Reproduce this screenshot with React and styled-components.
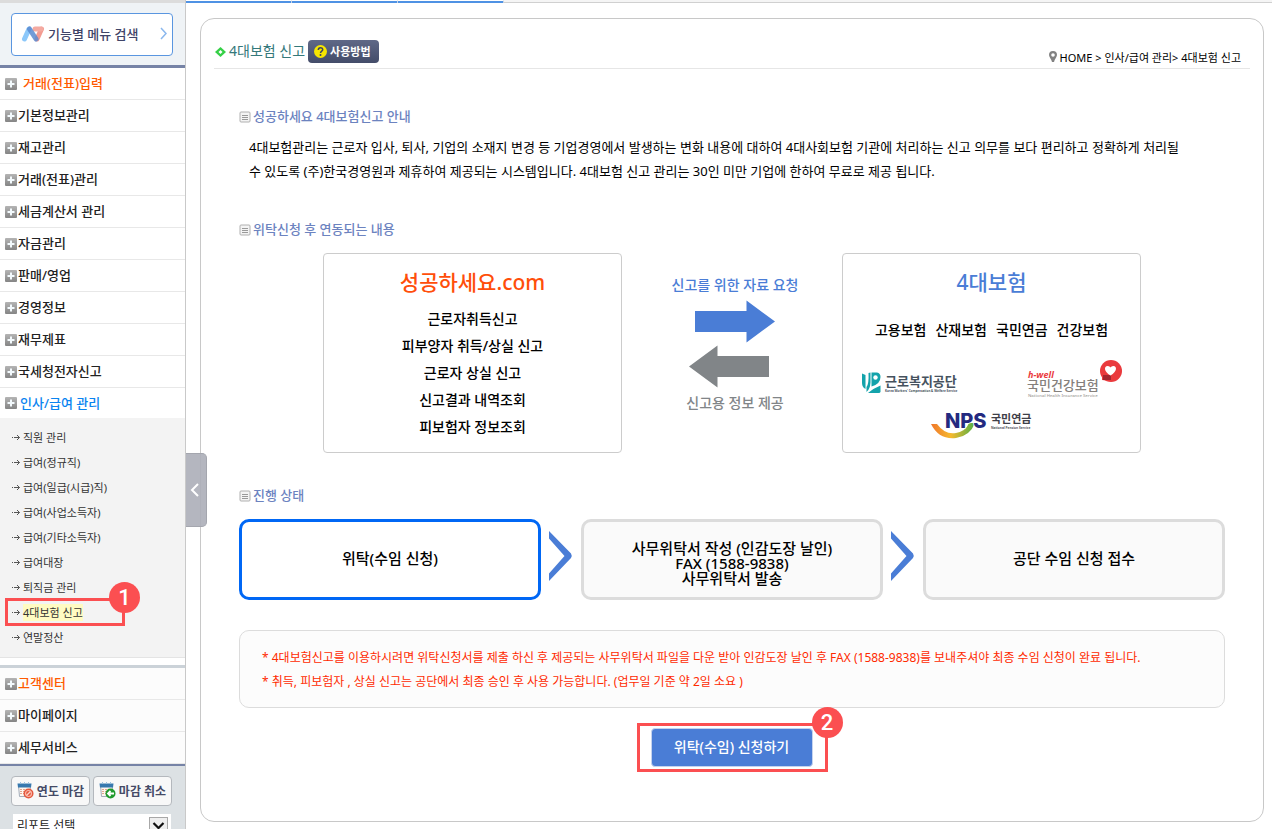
import React from 'react'
import styled, { createGlobalStyle } from 'styled-components'

const GlobalStyle = createGlobalStyle`
    * {
        box-sizing: border-box;
    }

    body {
        margin: 0;
        background: #fff;
        color: #000;
        font-family: 'Noto Sans', 'Noto Sans CJK KR', sans-serif;
        font-size: 13px;
    }

    a {
        color: inherit;
        text-decoration: none;
    }

    ul, p, h1, h2, h3 {
        margin: 0;
        padding: 0;
        list-style: none;
    }

    button, select {
        font-family: inherit;
    }

    svg {
        display: block;
        flex: none;
    }
`

const Page = styled.div`
    display: flex;
    height: 100vh;
    overflow: hidden;
`

const Sidebar = styled.aside`
    display: flex;
    flex-direction: column;
    flex: none;
    width: 186px;
    border-right: 1px solid #c9c9c9;
    background: #fff;
`

const SearchArea = styled.div`
    padding: 10px 12px 9px 11px;
    background: #eff3f6;
    border-top: 3px solid #dcdcdc;
    border-bottom: 3px solid #7683a6;
`

const SearchButton = styled.button`
    display: flex;
    align-items: center;
    gap: 3px;
    width: 100%;
    height: 43px;
    padding: 0 5px 2px 9px;
    border: 1px solid #5a96e0;
    border-radius: 4px;
    background: #fff;
    color: #3f4468;
    font-size: 13px;
    font-weight: 500;
    cursor: pointer;

    span {
        flex: 1;
        text-align: left;
        white-space: nowrap;
    }
`

const MenuLink = styled.a`
    display: flex;
    align-items: center;
    gap: ${({ $gap }) => $gap || 1}px;
    height: ${({ $last }) => ($last ? 30 : 32)}px;
    padding-left: 5px;
    border-bottom: ${({ $last }) => ($last ? 'none' : '1px solid #e8e8e8')};
    color: ${({ $color }) => $color || '#222'};
    font-weight: 500;

    span {
        padding-bottom: 2px;
    }
`

const SubMenu = styled.ul`
    padding: 7px 0 7px 12px;
    background: #f3f3f3;
    border-bottom: 1px solid #e4e4e4;
`

const SubItem = styled.li`
    position: relative;

    a {
        display: flex;
        align-items: center;
        gap: 3px;
        height: 25px;
        color: #333;
        font-size: 11px;
    }
`

const SubLabel = styled.span`
    line-height: 17px;
    background: ${({ $active }) => ($active ? '#fffbc2' : 'none')};
`

const SupportMenu = styled.div`
    margin-top: 7px;
    border-top: 3px solid #cbd2d8;
    border-bottom: 2px solid #7683a6;
    background: #fcfcfc;
`

const SidebarFooter = styled.div`
    flex: 1;
    padding: 10px 13px 0 11px;
    background: #dce1e4;
`

const FooterButtons = styled.div`
    display: flex;
    gap: 3px;
`

const CloseButton = styled.button`
    display: flex;
    align-items: center;
    justify-content: center;
    gap: 3px;
    flex: 1;
    height: 30px;
    padding: 0 0 1px;
    border: 1px solid #b4b8bd;
    border-radius: 4px;
    background: #f8f8f8;
    color: #454a66;
    font-size: 12px;
    font-weight: 700;
    white-space: nowrap;
    cursor: pointer;
`

const SelectBox = styled.div`
    position: relative;
    display: flex;
    margin: 8px 1px 0 2px;
    background: #fff;

    svg {
        position: absolute;
        right: 3px;
        top: 3px;
        pointer-events: none;
    }
`

const ReportSelect = styled.select`
    flex: 1;
    height: 22px;
    padding: 0 4px;
    border: none;
    background: #fff;
    appearance: none;
    color: #222;
    font-size: 12px;
`

/* numbered badge on the corner of a red outline */
const Badge = styled.span`
    position: absolute;
    right: -18px;
    top: -19px;
    display: flex;
    align-items: center;
    justify-content: center;
    width: 31px;
    height: 31px;
    border-radius: 50%;
    background: #fb4f51;
    color: #fff;
    font-family: Roboto, sans-serif;
    font-size: 22px;
    font-weight: 500;
`

const SubMarker = styled.div`
    position: absolute;
    left: -7px;
    top: -2px;
    width: 120px;
    height: 28px;
    border: 3px solid #fb4f51;
    pointer-events: none;
`

const Main = styled.main`
    position: relative;
    display: flex;
    flex-direction: column;
    flex: 1;
    min-width: 0;
`

const TabStrip = styled.div`
    display: flex;
    height: 3px;
    background: #f5f5f5;
    border-bottom: 1px solid #d0d0d0;
`

const Tab = styled.div`
    width: 106px;
    height: 3px;
    border-top: 1px solid #fff;
    border-right: 1px solid #c8d4e4;
    background: #4f92e4;
`

const FoldHandle = styled.button`
    position: absolute;
    left: 0;
    top: 453px;
    display: flex;
    align-items: center;
    width: 21px;
    height: 74px;
    padding: 0 0 0 4px;
    border: 1px solid #a4a6ae;
    border-left: none;
    border-radius: 0 5px 5px 0;
    background: rgba(172, 174, 184, 0.9);
    cursor: pointer;
`

const Panel = styled.section`
    flex: 1;
    margin: 15px 8px 7px 14px;
    border: 1px solid #c8c8c8;
    border-radius: 14px;
    background: #fff;
`

const PanelHeader = styled.header`
    display: flex;
    justify-content: space-between;
    align-items: flex-end;
    height: 50px;
    margin: 0 13px;
    padding-right: 9px;
    border-bottom: 1px solid #e6e6e6;
`

const TitleGroup = styled.div`
    display: flex;
    align-items: center;
    gap: 3px;
    padding: 0 0 5px 1px;

    h1 {
        padding-bottom: 3px;
        color: #34787a;
        font-size: 14px;
        font-weight: 400;
    }
`

const HelpButton = styled.button`
    display: flex;
    align-items: center;
    gap: 3px;
    height: 23px;
    padding: 0 8px 0 6px;
    border: none;
    border-radius: 4px;
    background: linear-gradient(#5f6887, #434c69);
    color: #fff;
    font-size: 11px;
    font-weight: 700;
    cursor: pointer;

    span {
        padding-bottom: 2px;
    }
`

const Breadcrumb = styled.nav`
    display: flex;
    align-items: center;
    gap: 3px;
    height: 23px;
    font-size: 11px;
`

const Content = styled.div`
    padding: 36px 38px 0;
`

const SectionTitle = styled.h2`
    display: flex;
    align-items: center;
    gap: 2px;
    height: 24px;
    color: #6c83bf;
    font-size: 13px;
    font-weight: 500;

    span {
        padding-bottom: 3px;
    }
`

const Intro = styled.p`
    margin: 6px 10px 35px;
    font-size: 13px;
    line-height: 24px;
`

const Exchange = styled.div`
    display: flex;
    justify-content: center;
    margin: 11px 0 31px;
`

const Card = styled.div`
    flex: 0 1 299px;
    height: 200px;
    padding-top: 12px;
    border: 1px solid #ccc;
    border-radius: 4px;
    text-align: center;
    font-weight: 500;

    h3 {
        color: ${({ $color }) => $color};
        font-size: 21px;
        font-weight: 500;
        line-height: 32px;
    }
`

const CardList = styled.ul`
    margin-top: 7px;
    font-size: 14px;
    line-height: 27px;
`

const Insurances = styled.ul`
    display: flex;
    justify-content: center;
    gap: 9px;
    margin: 20px 0 17px;
    font-size: 14px;
    line-height: 24px;
`

const LogoRow = styled.div`
    display: flex;
    justify-content: space-between;
    align-items: center;
    padding: 0 18px;
`

const LogoBottom = styled.div`
    display: flex;
    justify-content: center;
    margin-top: 12px;
    padding-right: 18px;
`

const Arrows = styled.div`
    display: flex;
    flex-direction: column;
    align-items: center;
    gap: 3px;
    width: 220px;
    padding: 20px 0 0 6px;
    font-size: 14px;
    font-weight: 500;
    line-height: 24px;
`

const ArrowLabel = styled.p`
    color: ${({ $color }) => $color};
`

const Steps = styled.div`
    display: grid;
    grid-template-columns: 1fr 40px 1fr 40px 1fr;
    align-items: center;
    justify-items: center;
    margin-top: 11px;
`

const Step = styled.div`
    display: flex;
    align-items: center;
    justify-content: center;
    width: 100%;
    height: 81px;
    padding: ${({ $multiline }) => ($multiline ? '7px 0 0' : '0 0 2px')};
    border: 3px solid ${({ $current }) => ($current ? '#0067f5' : '#dcdcdc')};
    border-radius: 10px;
    background: ${({ $current }) => ($current ? '#fff' : '#fafafa')};
    font-size: 15px;
    font-weight: 500;
    line-height: 15px;
    text-align: center;
`

const Notice = styled.div`
    height: 78px;
    margin-top: 30px;
    padding: 15px 22px;
    border: 1px solid #dcdcdc;
    border-radius: 10px;
    background: #fcfcfc;
    color: #ff2a00;
    font-size: 12px;
    line-height: 24px;
`

const ApplyArea = styled.div`
    display: flex;
    justify-content: center;
    margin-top: 15px;
`

const ApplyFrame = styled.div`
    position: relative;
    padding: 2px 12px 2px 11px;
    border: 3px solid #fb4f51;
`

const ApplyButton = styled.button`
    width: 162px;
    height: 39px;
    padding: 0 0 3px;
    border: 1px solid #c5d3ee;
    border-radius: 4px;
    background: #4a7dd6;
    color: #fff;
    font-size: 14px;
    font-weight: 500;
    cursor: pointer;
`

const PlusIcon = () => (
    <svg width="12" height="12" viewBox="0 0 12 12">
        <defs>
            <linearGradient id="plusFill" x1="0" y1="0" x2="0" y2="1">
                <stop offset="0" stopColor="#b4b4b4" />
                <stop offset="1" stopColor="#858585" />
            </linearGradient>
        </defs>
        <rect width="12" height="12" rx="1" fill="url(#plusFill)" />
        <path d="M5 2.500h2V5h2.500v2H7v2.500H5V7H2.500V5H5z" fill="#f3fafd" />
    </svg>
)

const ItemArrow = () => (
    <svg width="8" height="7" viewBox="0 0 8 7" fill="none" stroke="#555">
        <path d="M0 3.500h1M2 3.500h5.500" />
        <path d="M5 1l2.500 2.500L5 6" />
    </svg>
)

const BrandIcon = () => (
    <svg width="24" height="16" viewBox="0 0 24 16" fill="none" strokeWidth="5" strokeLinecap="round">
        <path d="M20.500 3L16 13" stroke="#f39b91" />
        <path d="M3.500 13L8 3" stroke="#8cc8fa" />
        <path d="M14 3h6" stroke="#f4aaa1" />
        <path d="M8.500 3L15 13" stroke="#5b8bd0" strokeOpacity="0.850" />
    </svg>
)

const CalendarIcon = ({ cancel }) => (
    <svg width="17" height="17" viewBox="0 0 17 17">
        <path d="M1.500 3.500h12l-1 11h-10z" fill="#fdf6f0" stroke="#a3adba" />
        <path d="M0.500 1.500h14l-.5 4H1z" fill="#3778ae" />
        <path d="M3.500 0v2M7.500 0v2M11.500 0v2" stroke="#9cc0dd" />
        <path d="M3 7.500h9M3 9.500h9M3 11.500h9" stroke="#e2a68c" strokeDasharray="2 1" />
        <circle cx="11.500" cy="11.500" r="5" fill={cancel ? '#1f9a2c' : '#e4573d'} />
        {cancel ? (
            <path d="M15 11.500H9.500M11.500 9L9 11.500l2.500 2.500" fill="none" stroke="#fff" strokeWidth="1.800" />
        ) : (
            <>
                <circle cx="11.500" cy="11.500" r="3" fill="none" stroke="#fbb5a4" strokeWidth="1.200" />
                <path d="M9.500 13.500l4-4" stroke="#fbd3c8" strokeWidth="1.200" />
            </>
        )}
    </svg>
)

const DropIcon = () => (
    <svg width="19" height="18" viewBox="0 0 19 18">
        <rect x="0.500" y="0.500" width="18" height="17" fill="#efefef" stroke="#a8a8a8" />
        <path d="M4.500 6l5 5 5-5" fill="none" stroke="#111" strokeWidth="2.200" />
    </svg>
)

const DiamondIcon = () => (
    <svg width="11" height="10" viewBox="0 0 11 10">
        <path d="M5.500 0L11 5l-5.500 5L0 5z" fill="#35d046" />
        <path d="M5.500 3l2 2-2 2-2-2z" fill="#fff" />
    </svg>
)

const HelpIcon = () => (
    <svg width="13" height="13" viewBox="0 0 13 13">
        <circle cx="6.500" cy="6.500" r="6.500" fill="#f7e600" />
        <path d="M4.300 5c0-3 4.400-3 4.400-.3C8.700 6.200 6.500 6 6.500 8" fill="none" stroke="#3e4560" strokeWidth="1.500" />
        <circle cx="6.500" cy="10" r="1" fill="#3e4560" />
    </svg>
)

const PinIcon = () => (
    <svg width="8" height="11" viewBox="0 0 8 11">
        <path d="M4 0a4 4 0 0 1 4 4c0 2-2.500 4-3 7H3c-.5-3-3-5-3-7a4 4 0 0 1 4-4z" fill="#828282" />
        <circle cx="4" cy="4" r="1.800" fill="#fff" />
    </svg>
)

const DocIcon = () => (
    <svg width="12" height="12" viewBox="0 0 12 12">
        <rect x="1" y="1" width="10" height="10" rx="1" fill="#f4f4f4" stroke="#b0b0b0" />
        <path d="M3 4.500h6M3 6.500h6M3 8.500h6" stroke="#999" />
    </svg>
)

const ExchangeArrows = () => (
    <svg width="92" height="88" viewBox="0 0 92 88">
        <path d="M6 11h51.500V0.500L86 21.500 57.500 42.500V32H6z" fill="#4a7dd6" />
        <path d="M80 56H28.500V45.500L0 66.500 28.500 87.500V77H80z" fill="#818588" />
    </svg>
)

const StepChevron = () => (
    <svg width="24" height="58" viewBox="0 0 24 58">
        <path d="M0 0l22 22.500q1.500 2.500 0 4.500L0 50v-7.500L15.500 25 0 7.500z" fill="#4a7dd6" />
    </svg>
)

const WelfareLogo = () => (
    <svg width="98" height="36" viewBox="0 0 98 36" role="img" aria-label="근로복지공단">
        <path d="M1 12.500l3.500 1.500v14q-3.500-2-3.500-6z" fill="#13a3ab" />
        <path d="M9.500 11.500v10q-.5 7-4 9.500v-5q2.500-3 2-14z" fill="#13a3ab" />
        <path d="M10.500 11.500h5.500q3.500.5 3.500 4.500 0 7-9 9.500z" fill="#13a3ab" />
        <circle cx="14.500" cy="16.500" r="2.200" fill="#fff" />
        <path d="M7 32q6-5 12.500-7.500v6q0 1.500-2 1.500z" fill="#13a3ab" />
        <text x="24" y="25" fontSize="13" fontWeight="700" fill="#46525e">근로복지공단</text>
        <text x="24" y="31" fontSize="3" fontWeight="700" fill="#46525e">Korea Workers' Compensation &amp; Welfare Service</text>
    </svg>
)

const HealthLogo = () => (
    <svg width="96" height="40" viewBox="0 0 96 40" role="img" aria-label="국민건강보험">
        <text x="2" y="19" fontSize="9" fontWeight="700" fontStyle="italic" fill="#ea3a3d">h-well</text>
        <text x="1" y="31" fontSize="13" fontWeight="500" fill="#85807c">국민건강보험</text>
        <text x="2" y="38" fontSize="4.300" fill="#a09c98">National Health Insurance Service</text>
        <path d="M76 14h9v8l-9-1z" fill="#ea3a3d" />
        <circle cx="85" cy="12" r="11" fill="#ea3a3d" />
        <path d="M77 16h8v5h-8z" fill="#a3262f" />
        <path d="M84.500 16.500c-7-4-6.500-9.500-3-9.500 2 0 3 1.500 3 1.500s1-1.500 3-1.500c3.500 0 4 5.500-3 9.500z" fill="#fff" />
    </svg>
)

const PensionLogo = () => (
    <svg width="104" height="28" viewBox="0 0 104 28" role="img" aria-label="NPS 국민연금">
        <defs>
            <linearGradient id="pensionArc">
                <stop offset="0" stopColor="#f0762b" />
                <stop offset="0.450" stopColor="#f5b92e" />
                <stop offset="1" stopColor="#4faf45" />
            </linearGradient>
        </defs>
        <path d="M0 13h6q8 11 19 9 10-2 13-10h6q-5 13-19 15Q8 29 0 13z" fill="url(#pensionArc)" />
        <text x="14" y="17" fontFamily="Inter, sans-serif" fontSize="20" fontWeight="800" fill="#242a80" stroke="#fff" strokeWidth="1.500" paintOrder="stroke">NPS</text>
        <text x="60" y="12" fontSize="11" fontWeight="700" fill="#3f4049">국민연금</text>
        <text x="60" y="18" fontSize="3.200" fontWeight="700" fill="#55565e">National Pension Service</text>
    </svg>
)

const menus = [
    { label: '거래(전표)입력', color: '#ff5a00', gap: 6 },
    { label: '기본정보관리' },
    { label: '재고관리' },
    { label: '거래(전표)관리' },
    { label: '세금계산서 관리' },
    { label: '자금관리' },
    { label: '판매/영업' },
    { label: '경영정보' },
    { label: '재무제표' },
    { label: '국세청전자신고' },
    { label: '인사/급여 관리', color: '#0a84f0', gap: 3, last: true },
]

const subMenus = [
    '직원 관리',
    '급여(정규직)',
    '급여(일급(시급)직)',
    '급여(사업소득자)',
    '급여(기타소득자)',
    '급여대장',
    '퇴직금 관리',
    '4대보험 신고',
    '연말정산',
]

const supportMenus = [
    { label: '고객센터', color: '#ff5a00' },
    { label: '마이페이지' },
    { label: '세무서비스' },
]

const services = ['근로자취득신고', '피부양자 취득/상실 신고', '근로자 상실 신고', '신고결과 내역조회', '피보험자 정보조회']
const insurances = ['고용보험', '산재보험', '국민연금', '건강보험']

const MenuItem = ({ menu }) => (
    <MenuLink href="#" $color={menu.color} $gap={menu.gap} $last={menu.last}>
        <PlusIcon />
        <span>{menu.label}</span>
    </MenuLink>
)

const Heading = ({ children }) => (
    <SectionTitle>
        <DocIcon />
        <span>{children}</span>
    </SectionTitle>
)

const SideMenu = () => {
    return (
        <Sidebar>
            <SearchArea>
                <SearchButton>
                    <BrandIcon />
                    <span>기능별 메뉴 검색</span>
                    <svg width="7" height="13" viewBox="0 0 7 13" fill="none" stroke="#8bb8ee" strokeWidth="1.500">
                        <path d="M1 1l5 5.500L1 12" />
                    </svg>
                </SearchButton>
            </SearchArea>
            <nav>
                {menus.map((menu) => (
                    <MenuItem key={menu.label} menu={menu} />
                ))}
                <SubMenu>
                    {subMenus.map((label) => (
                        <SubItem key={label}>
                            <a href="#">
                                <ItemArrow />
                                <SubLabel $active={label === '4대보험 신고'}>{label}</SubLabel>
                            </a>
                            {label === '4대보험 신고' && (
                                <SubMarker>
                                    <Badge>1</Badge>
                                </SubMarker>
                            )}
                        </SubItem>
                    ))}
                </SubMenu>
            </nav>
            <SupportMenu>
                {supportMenus.map((menu) => (
                    <MenuItem key={menu.label} menu={menu} />
                ))}
            </SupportMenu>
            <SidebarFooter>
                <FooterButtons>
                    <CloseButton>
                        <CalendarIcon />
                        연도 마감
                    </CloseButton>
                    <CloseButton>
                        <CalendarIcon cancel />
                        마감 취소
                    </CloseButton>
                </FooterButtons>
                <SelectBox>
                    <ReportSelect aria-label="리포트 선택">
                        <option>리포트 선택</option>
                    </ReportSelect>
                    <DropIcon />
                </SelectBox>
            </SidebarFooter>
        </Sidebar>
    )
}

const App = () => {
    return (
        <Page>
            <GlobalStyle />
            <SideMenu />
            <Main>
                <TabStrip>
                    <Tab />
                    <Tab />
                    <Tab />
                </TabStrip>
                <Panel>
                    <PanelHeader>
                        <TitleGroup>
                            <DiamondIcon />
                            <h1>4대보험 신고</h1>
                            <HelpButton>
                                <HelpIcon />
                                <span>사용방법</span>
                            </HelpButton>
                        </TitleGroup>
                        <Breadcrumb>
                            <PinIcon />
                            <span>HOME &gt; 인사/급여 관리&gt; 4대보험 신고</span>
                        </Breadcrumb>
                    </PanelHeader>
                    <Content>
                        <Heading>성공하세요 4대보험신고 안내</Heading>
                        <Intro>
                            4대보험관리는 근로자 입사, 퇴사, 기업의 소재지 변경 등 기업경영에서 발생하는 변화 내용에 대하여 4대사회보험 기관에 처리하는 신고 의무를 보다 편리하고 정확하게 처리될
                            <br />
                            수 있도록 (주)한국경영원과 제휴하여 제공되는 시스템입니다. 4대보험 신고 관리는 30인 미만 기업에 한하여 무료로 제공 됩니다.
                        </Intro>

                        <Heading>위탁신청 후 연동되는 내용</Heading>
                        <Exchange>
                            <Card $color="#ff4e0a">
                                <h3>성공하세요.com</h3>
                                <CardList>
                                    {services.map((service) => (
                                        <li key={service}>{service}</li>
                                    ))}
                                </CardList>
                            </Card>
                            <Arrows>
                                <ArrowLabel $color="#4a7dd6">신고를 위한 자료 요청</ArrowLabel>
                                <ExchangeArrows />
                                <ArrowLabel $color="#818588">신고용 정보 제공</ArrowLabel>
                            </Arrows>
                            <Card $color="#4a7dd6">
                                <h3>4대보험</h3>
                                <Insurances>
                                    {insurances.map((name) => (
                                        <li key={name}>{name}</li>
                                    ))}
                                </Insurances>
                                <LogoRow>
                                    <WelfareLogo />
                                    <HealthLogo />
                                </LogoRow>
                                <LogoBottom>
                                    <PensionLogo />
                                </LogoBottom>
                            </Card>
                        </Exchange>

                        <Heading>진행 상태</Heading>
                        <Steps>
                            <Step $current>위탁(수임 신청)</Step>
                            <StepChevron />
                            <Step $multiline>
                                사무위탁서 작성 (인감도장 날인)
                                <br />
                                FAX (1588-9838)
                                <br />
                                사무위탁서 발송
                            </Step>
                            <StepChevron />
                            <Step>공단 수임 신청 접수</Step>
                        </Steps>

                        <Notice>
                            <p>* 4대보험신고를 이용하시려면 위탁신청서를 제출 하신 후 제공되는 사무위탁서 파일을 다운 받아 인감도장 날인 후 FAX (1588-9838)를 보내주셔야 최종 수임 신청이 완료 됩니다.</p>
                            <p>* 취득, 피보험자 , 상실 신고는 공단에서 최종 승인 후 사용 가능합니다. (업무일 기준 약 2일 소요 )</p>
                        </Notice>

                        <ApplyArea>
                            <ApplyFrame>
                                <ApplyButton>위탁(수임) 신청하기</ApplyButton>
                                <Badge>2</Badge>
                            </ApplyFrame>
                        </ApplyArea>
                    </Content>
                </Panel>
                <FoldHandle aria-label="메뉴 접기">
                    <svg width="9" height="14" viewBox="0 0 9 14" fill="none" stroke="#fff" strokeWidth="2">
                        <path d="M8 1L2 7l6 6" />
                    </svg>
                </FoldHandle>
            </Main>
        </Page>
    )
}

export default App
